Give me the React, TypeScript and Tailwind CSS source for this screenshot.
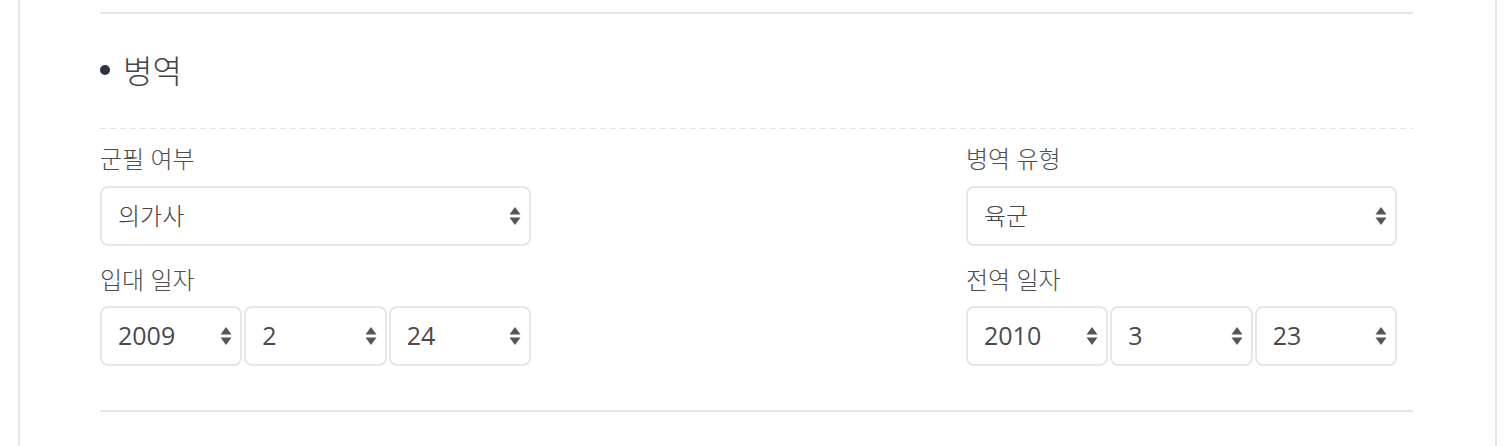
import React from "react";

const FONT = { fontFamily: '"Open Sans", "Noto Sans CJK KR", sans-serif' };

function Arrows() {
  return (
    <svg width="12" height="20" viewBox="0 0 12 20" className="shrink-0">
      <path d="M6 1 L11.5 8.5 L0.5 8.5 Z" fill="#555" />
      <path d="M6 19 L11.5 11.5 L0.5 11.5 Z" fill="#555" />
    </svg>
  );
}

function Select({ value, num = false }: { value: string; num?: boolean }) {
  return (
    <div className="flex h-[60px] items-center justify-between rounded-[8px] border-2 border-[#e6e6e6] bg-white pl-4 pr-[8px]">
      <span className={num ? "text-[25px] font-normal text-[#4a4a4a]" : "text-[24px] font-light text-[#444]"}>{value}</span>
      <Arrows />
    </div>
  );
}

function Label({ children }: { children: React.ReactNode }) {
  return <div className="h-[36px] text-[24px] font-light leading-[36px] text-[#4d4d4d]">{children}</div>;
}

function Column({
  label1,
  value1,
  label2,
  date,
}: {
  label1: string;
  value1: string;
  label2: string;
  date: [string, string, string];
}) {
  return (
    <div className="w-[431px]">
      <div className="mt-[12px]">
        <Label>{label1}</Label>
      </div>
      <div className="mt-[9px]">
        <Select value={value1} />
      </div>
      <div className="mt-[16px]">
        <Label>{label2}</Label>
      </div>
      <div className="mt-[8px] grid grid-cols-3 gap-[2px]">
        {date.map((d, i) => (
          <Select key={i} value={d} num />
        ))}
      </div>
    </div>
  );
}

export default function App() {
  return (
    <div className="h-[446px] w-full bg-white" style={FONT}>
      <div className="ml-[18px] h-[446px] w-[1479px] border-x-2 border-[#e6e6e6] pl-[80px] pr-[82px]">
        <div className="h-[12px]" />
        <div className="h-[2px] bg-[#e6e6e6]" />
        <div className="flex h-[114px] items-center gap-[13px]">
          <span className="mt-[-3px] h-[10px] w-[10px] rounded-full bg-[#2d3240]" />
          <span className="text-[32px] font-light leading-none text-[#444]">병역</span>
        </div>
        <div className="h-px bg-[repeating-linear-gradient(90deg,#e2e2e2_0px,#e2e2e2_6px,transparent_6px,transparent_10px)]" />
        <div className="flex justify-between pr-4">
          <Column label1="군필 여부" value1="의가사" label2="입대 일자" date={["2009", "2", "24"]} />
          <Column label1="병역 유형" value1="육군" label2="전역 일자" date={["2010", "3", "23"]} />
        </div>
        <div className="mt-[44px] h-[2px] bg-[#e6e6e6]" />
      </div>
    </div>
  );
}
